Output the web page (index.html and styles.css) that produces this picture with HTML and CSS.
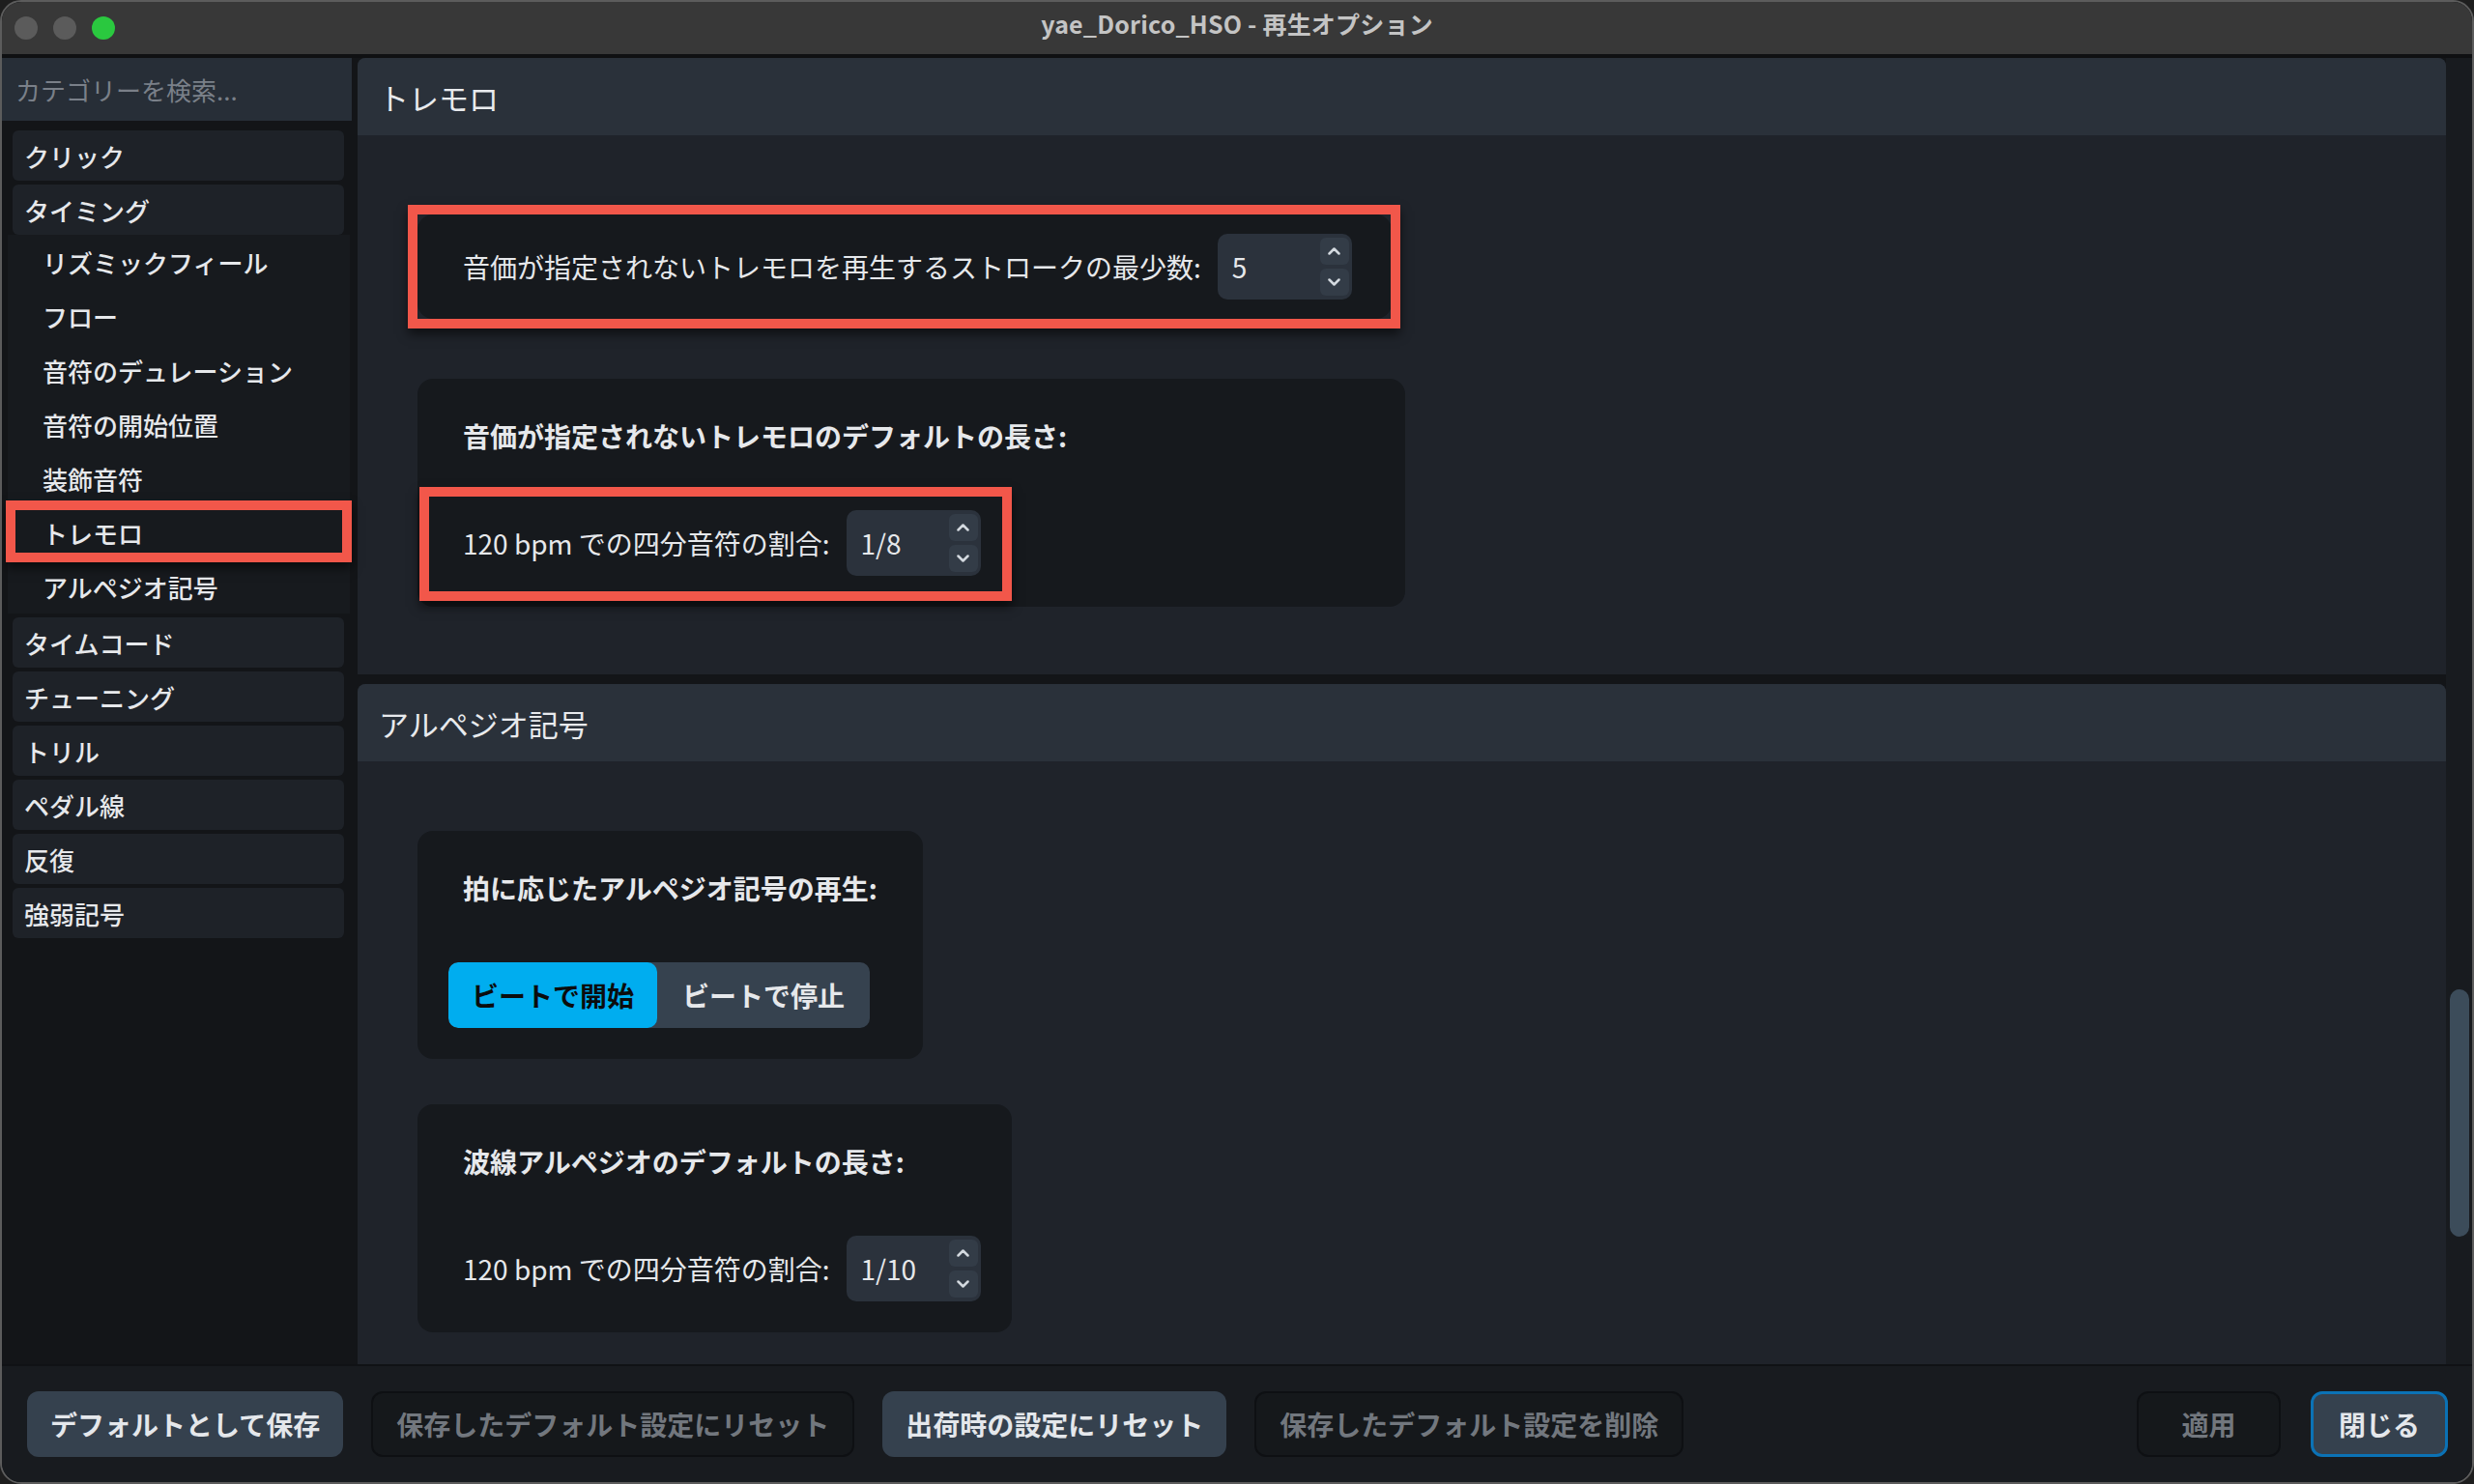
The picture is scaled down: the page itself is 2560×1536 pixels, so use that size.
FILE: index.html
```html
<!DOCTYPE html>
<html lang="ja">
<head>
  <meta charset="UTF-8">
  <meta name="viewport" content="width=device-width, initial-scale=1.0">
  <title>yae_Dorico_HSO - 再生オプション</title>
  <link rel="stylesheet" href="styles.css">
</head>
<body>
  <div class="window">
    <!-- Title bar -->
    <header class="titlebar">
      <div class="lights">
        <span class="light"></span>
        <span class="light"></span>
        <span class="light light-green"></span>
      </div>
      <div class="title">yae_Dorico_HSO - 再生オプション</div>
    </header>

    <div class="main">
      <!-- Category list -->
      <aside class="sidebar">
        <div class="search">カテゴリーを検索...</div>
        <nav class="categories">
          <div class="cat">クリック</div>
          <div class="cat cat-open">タイミング</div>
          <div class="subcats">
            <div class="subcat">リズミックフィール</div>
            <div class="subcat">フロー</div>
            <div class="subcat">音符のデュレーション</div>
            <div class="subcat">音符の開始位置</div>
            <div class="subcat">装飾音符</div>
            <div class="subcat subcat-marked">トレモロ<span class="mark mark-side"></span></div>
            <div class="subcat">アルペジオ記号</div>
          </div>
          <div class="cat">タイムコード</div>
          <div class="cat">チューニング</div>
          <div class="cat">トリル</div>
          <div class="cat">ペダル線</div>
          <div class="cat">反復</div>
          <div class="cat">強弱記号</div>
        </nav>
      </aside>

      <!-- Options -->
      <div class="content">
        <div class="scroll">
          <section class="panel">
            <h2 class="panel-head">トレモロ</h2>
            <div class="panel-body panel-body-first">
              <div class="card card-single">
                <div class="row">
                  <span class="row-label">音価が指定されないトレモロを再生するストロークの最少数:</span>
                  <div class="spin">
                    <span class="spin-value">5</span>
                    <div class="spin-buttons">
                      <span class="spin-btn"><svg width="13" height="8" viewBox="0 0 13 8"><path d="M1.5 6.5 L6.5 1.5 L11.5 6.5"/></svg></span>
                      <span class="spin-btn"><svg width="13" height="8" viewBox="0 0 13 8"><path d="M1.5 1.5 L6.5 6.5 L11.5 1.5"/></svg></span>
                    </div>
                  </div>
                </div>
                <span class="mark mark-card"></span>
              </div>

              <div class="card card-wide">
                <div class="card-label">音価が指定されないトレモロのデフォルトの長さ:</div>
                <div class="row">
                  <span class="row-label">120 bpm での四分音符の割合:</span>
                  <div class="spin">
                    <span class="spin-value">1/8</span>
                    <div class="spin-buttons">
                      <span class="spin-btn"><svg width="13" height="8" viewBox="0 0 13 8"><path d="M1.5 6.5 L6.5 1.5 L11.5 6.5"/></svg></span>
                      <span class="spin-btn"><svg width="13" height="8" viewBox="0 0 13 8"><path d="M1.5 1.5 L6.5 6.5 L11.5 1.5"/></svg></span>
                    </div>
                  </div>
                  <span class="mark mark-row"></span>
                </div>
              </div>
            </div>
          </section>

          <section class="panel">
            <h2 class="panel-head">アルペジオ記号</h2>
            <div class="panel-body panel-body-second">
              <div class="card">
                <div class="card-label">拍に応じたアルペジオ記号の再生:</div>
                <div class="segmented">
                  <span class="segment segment-active">ビートで開始</span>
                  <span class="segment">ビートで停止</span>
                </div>
              </div>

              <div class="card card-next">
                <div class="card-label">波線アルペジオのデフォルトの長さ:</div>
                <div class="row">
                  <span class="row-label">120 bpm での四分音符の割合:</span>
                  <div class="spin">
                    <span class="spin-value">1/10</span>
                    <div class="spin-buttons">
                      <span class="spin-btn"><svg width="13" height="8" viewBox="0 0 13 8"><path d="M1.5 6.5 L6.5 1.5 L11.5 6.5"/></svg></span>
                      <span class="spin-btn"><svg width="13" height="8" viewBox="0 0 13 8"><path d="M1.5 1.5 L6.5 6.5 L11.5 1.5"/></svg></span>
                    </div>
                  </div>
                </div>
              </div>
            </div>
          </section>
        </div>
        <div class="scrolltrack"><div class="thumb"></div></div>
      </div>
    </div>

    <!-- Dialog buttons -->
    <footer class="footer">
      <button class="btn">デフォルトとして保存</button>
      <button class="btn btn-disabled">保存したデフォルト設定にリセット</button>
      <button class="btn">出荷時の設定にリセット</button>
      <button class="btn btn-disabled">保存したデフォルト設定を削除</button>
      <button class="btn btn-disabled btn-apply">適用</button>
      <button class="btn btn-close">閉じる</button>
    </footer>
  </div>
</body>
</html>
```

FILE: styles.css
```css
/* Dorico playback options dialog */
* {
  box-sizing: border-box;
}

html,
body {
  margin: 0;
  padding: 0;
}

body {
  width: 2560px;
  height: 1536px;
  background: #1e1e1e;
  font-family: "Noto Sans CJK JP", "Noto Sans", sans-serif;
  color: #e6e8eb;
  overflow: hidden;
}

.window {
  width: 2560px;
  height: 1536px;
  border: 2px solid #5c5c5c;
  border-radius: 22px;
  overflow: hidden;
  display: flex;
  flex-direction: column;
  background: #131518;
}

/* Title bar */
.titlebar {
  height: 58px;
  flex: none;
  display: grid;
  grid-template-columns: 1fr auto 1fr;
  align-items: center;
  background: #383838;
  border-bottom: 4px solid #0f1012;
}

.lights {
  display: flex;
  gap: 16px;
  padding-left: 13px;
}

.light {
  width: 24px;
  height: 24px;
  border-radius: 50%;
  background: #5b5b5b;
}

.light-green {
  background: #2ac83f;
}

.title {
  padding-bottom: 10px;
  font-size: 25px;
  line-height: 1;
  font-weight: 700;
  color: #c4c4c4;
  letter-spacing: 0.2px;
}

.main {
  flex: 1;
  display: flex;
  min-height: 0;
}

/* Sidebar */
.sidebar {
  width: 362px;
  flex: none;
  background: #131518;
}

.search {
  height: 65px;
  padding-left: 14px;
  display: flex;
  align-items: center;
  background: #272e37;
  color: #7a8089;
  font-size: 26px;
}

.categories {
  padding: 10px 2px 0 6px;
}

.cat {
  height: 52px;
  margin: 0 6px 4px 5px;
  padding-left: 12px;
  display: flex;
  align-items: center;
  border-radius: 6px;
  background: #1e2228;
  font-size: 26px;
  font-weight: 500;
}

.cat-open {
  margin-bottom: 0;
}

.subcats {
  margin-bottom: 4px;
  background: #171a1e;
}

.subcat {
  height: 56px;
  padding-left: 36px;
  display: flex;
  align-items: center;
  font-size: 26px;
  font-weight: 500;
}

.subcat-marked {
  position: relative;
}

/* Red annotation frames */
.mark {
  position: absolute;
  border: 10px solid #f2574a;
  box-shadow: 0 6px 10px rgba(0, 0, 0, 0.55);
  pointer-events: none;
}

.mark-side {
  top: -5px;
  bottom: -3px;
  left: -2px;
  right: -2px;
}

.mark-card {
  top: -10px;
  bottom: -10px;
  left: -10px;
  right: -9px;
}

.mark-row {
  top: -24px;
  bottom: -26px;
  left: -30px;
  right: -32px;
}

/* Content */
.content {
  flex: 1;
  margin-left: 6px;
  display: flex;
  min-width: 0;
}

.scroll {
  flex: 1;
  display: flex;
  flex-direction: column;
  gap: 10px;
  overflow: hidden;
}

.panel {
  flex: none;
  border-radius: 8px 8px 0 0;
  overflow: hidden;
  background: #1f232a;
}

.panel-head {
  margin: 0;
  height: 80px;
  padding-left: 22px;
  display: flex;
  align-items: center;
  background: #2a313a;
  font-size: 31px;
  font-weight: 400;
  color: #e8eaed;
}

.panel-body {
  padding-left: 62px;
}

.panel-body-first {
  padding-top: 82px;
  padding-bottom: 70px;
}

.panel-body-second {
  padding-top: 72px;
  padding-bottom: 200px;
}

.card {
  position: relative;
  width: fit-content;
  padding: 32px 32px;
  border-radius: 16px;
  background: #16191d;
}

.card-single {
  width: 1008px;
  height: 108px;
  padding: 0 32px;
  display: flex;
  align-items: center;
  margin-bottom: 62px;
}

.card-wide {
  width: 1022px;
}

.card-next {
  margin-top: 47px;
}

.card-label {
  height: 60px;
  line-height: 54px;
  padding: 0 15px;
  margin-bottom: 44px;
  font-size: 28px;
  font-weight: 700;
  white-space: nowrap;
}

.row {
  position: relative;
  width: fit-content;
  display: flex;
  align-items: center;
  gap: 17px;
  padding-left: 15px;
}

.row-label {
  font-size: 28px;
  white-space: nowrap;
}

/* Spin box */
.spin {
  width: 139px;
  height: 68px;
  display: flex;
  padding: 4px 3px 4px 15px;
  border-radius: 10px;
  background: #2b323c;
}

.spin-value {
  flex: 1;
  line-height: 60px;
  font-size: 28px;
}

.spin-buttons {
  width: 30px;
  display: flex;
  flex-direction: column;
  gap: 4px;
}

.spin-btn {
  flex: 1;
  display: flex;
  align-items: center;
  justify-content: center;
  border-radius: 6px;
  background: #333c47;
}

.spin-btn path {
  fill: none;
  stroke: #d3d9df;
  stroke-width: 2.5;
  stroke-linecap: round;
  stroke-linejoin: round;
}

/* Segmented control */
.segmented {
  display: flex;
  width: fit-content;
  height: 68px;
  border-radius: 10px;
  overflow: hidden;
  background: #36424f;
}

.segment {
  padding: 0 26px;
  display: flex;
  align-items: center;
  font-size: 28px;
  font-weight: 700;
  color: #e6e8eb;
}

.segment-active {
  padding: 0 24px;
  background: #00adef;
  color: #0b0c0d;
  border-radius: 10px;
}

/* Scrollbar */
.scrolltrack {
  width: 27px;
  flex: none;
  padding-left: 4px;
  background: #181b1f;
}

.thumb {
  width: 20px;
  height: 256px;
  margin-top: 964px;
  border-radius: 10px;
  background: #3c4c5a;
}

/* Footer buttons */
.footer {
  height: 122px;
  flex: none;
  display: flex;
  gap: 29px;
  padding: 26px 25px 0 26px;
  border-top: 2px solid #101215;
  background: #181b1f;
}

.btn {
  height: 68px;
  padding: 0 24px;
  border: none;
  border-radius: 12px;
  background: #35414e;
  color: #e4e7eb;
  font-family: inherit;
  font-size: 28px;
  font-weight: 700;
  white-space: nowrap;
}

.btn-disabled {
  background: #15181b;
  border: 2px solid #0e1013;
  color: #72777e;
}

.btn-apply {
  width: 149px;
  margin-left: auto;
}

.btn-close {
  width: 142px;
  margin-left: 2px;
  border: 3px solid #0b72b5;
}
```
